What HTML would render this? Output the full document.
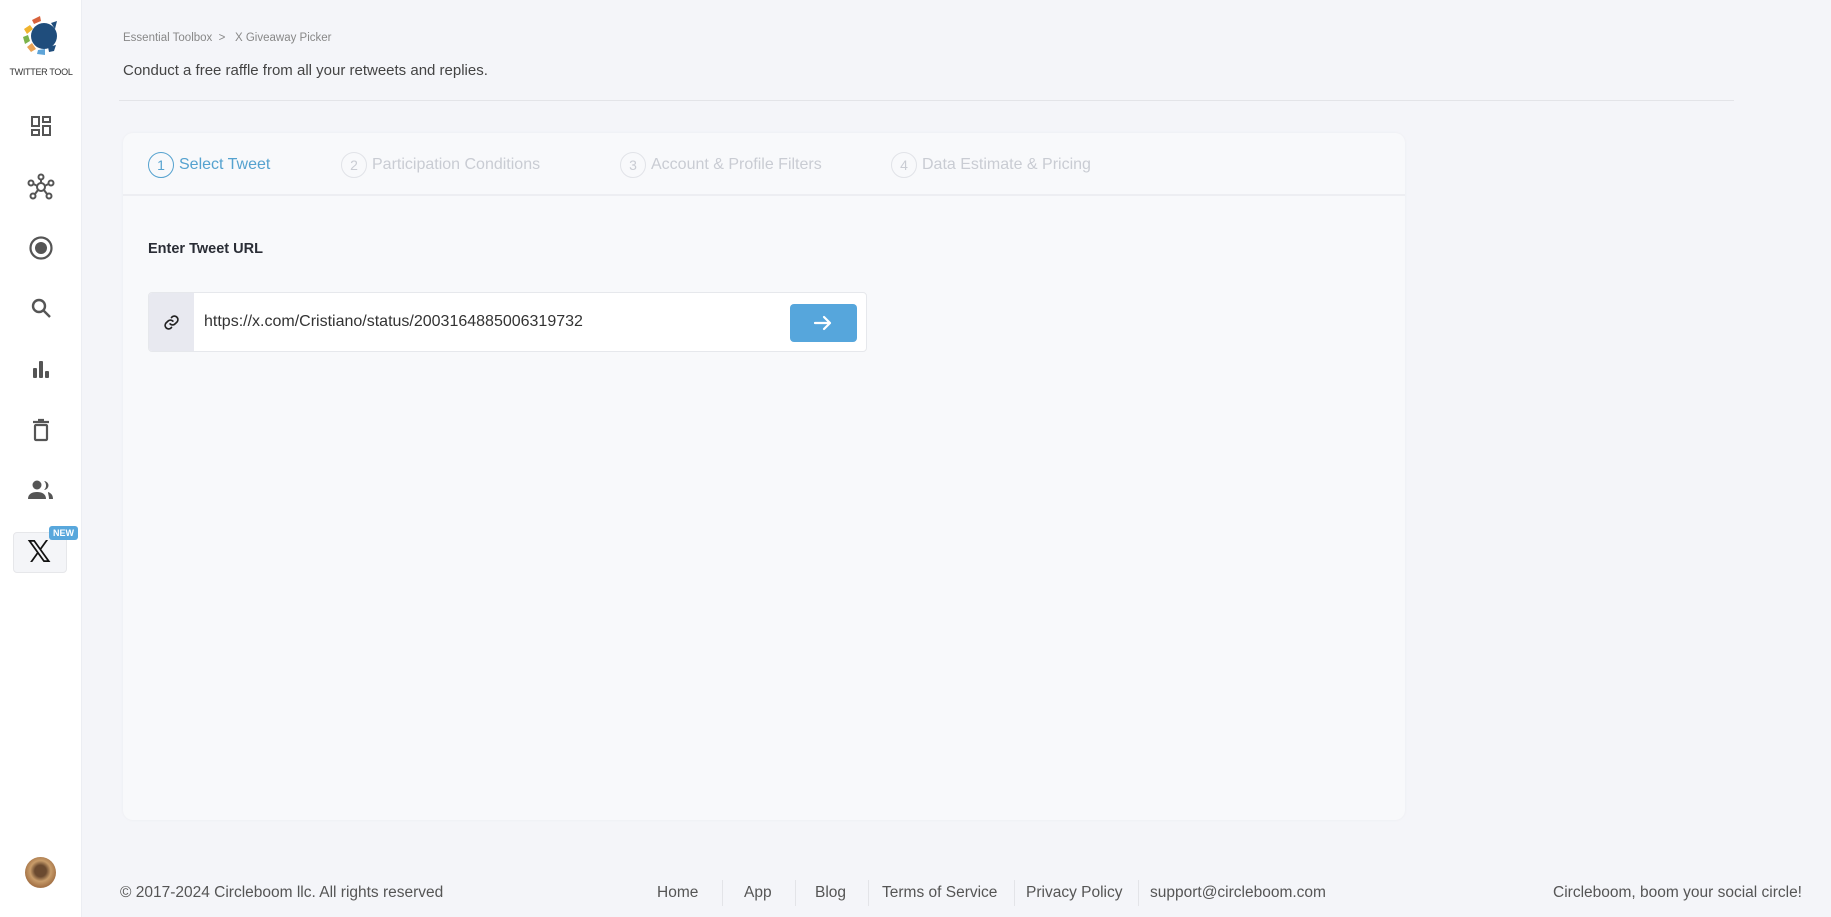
<!DOCTYPE html>
<html><head><meta charset="utf-8"><style>
*{margin:0;padding:0;box-sizing:border-box}
body{width:1831px;height:917px;overflow:hidden;background:#f4f5f9;font-family:"Liberation Sans",sans-serif;position:relative;color:#333}
.sb{position:absolute;left:0;top:0;width:82px;height:917px;background:#fff;border-right:1px solid #eceef3}
.ic{position:absolute;left:41px;transform:translate(-50%,-50%)}
.abs{position:absolute;white-space:nowrap}
.card{position:absolute;left:123px;top:133px;width:1282px;height:687px;background:#f8f9fb;border-radius:10px;box-shadow:0 0 3px rgba(0,0,0,.04)}
.hd{height:63px;border-bottom:2px solid #edeef2}
.step{position:absolute;top:19px;font-size:16px;color:#c9ccd3;display:flex;align-items:center}
.step .c{width:26px;height:26px;border:1.5px solid #e1e3e8;border-radius:50%;display:flex;align-items:center;justify-content:center;margin-right:5px;font-size:14px}
.step.a{color:#55a2cf}.step.a .c{border-color:#55a2cf}
.ft{position:absolute;top:884px;font-size:15.5px;color:#555}
.sep{position:absolute;top:880px;width:1px;height:26px;background:#e3e4e8}
</style></head><body>
<div class="sb">
  <svg class="ic" style="top:34px" width="46" height="46" viewBox="0 0 46 46">
    <path d="M14 9 L22 5 L23 10 L16 13Z" fill="#d8623c"/>
    <path d="M6 18 L12 14 L15 18 L9 23Z" fill="#f0b32d"/>
    <path d="M5 26 L10 24 L12 30 L7 33Z" fill="#7bb24a"/>
    <path d="M9 36 L14 32 L18 38 L13 41Z" fill="#e9a356"/>
    <path d="M20 39 L27 38 L27 44 L19 43Z" fill="#5ea4d8"/>
    <circle cx="26" cy="25" r="13" fill="#1f4d7c"/>
    <path d="M33 12 L39 10 L37 18Z" fill="#1f4d7c"/>
    <path d="M30 36 L38 34 L36 40 L31 41Z" fill="#1f4d7c"/>
  </svg>
  <div class="abs" style="left:0;width:82px;text-align:center;top:67px;font-size:9px;color:#333;letter-spacing:-.3px">TWITTER TOOL</div>
  <svg class="ic" style="top:126px" width="24" height="24" viewBox="0 0 24 24" fill="none" stroke="#555" stroke-width="2"><rect x="3" y="3" width="7" height="9"/><rect x="14" y="3" width="7" height="5"/><rect x="14" y="12" width="7" height="9"/><rect x="3" y="16" width="7" height="5"/></svg>
  <svg class="ic" style="top:187px" width="28" height="28" viewBox="0 0 28 28" fill="none" stroke="#555" stroke-width="2"><circle cx="14" cy="14" r="4"/><circle cx="14" cy="4" r="2.5"/><circle cx="4" cy="10" r="2.5"/><circle cx="24" cy="10" r="2.5"/><circle cx="6" cy="23" r="2.5"/><circle cx="22" cy="23" r="2.5"/><path d="M14 6.5V10M6.5 11l4 2M21.5 11l-4 2M8 21l3-4M20 21l-3-4"/></svg>
  <svg class="ic" style="top:248px" width="26" height="26" viewBox="0 0 26 26"><circle cx="13" cy="13" r="10.5" fill="none" stroke="#555" stroke-width="2.2"/><circle cx="13" cy="13" r="6" fill="#555"/></svg>
  <svg class="ic" style="top:308px" width="24" height="24" viewBox="0 0 24 24" fill="none" stroke="#555" stroke-width="2.4"><circle cx="10" cy="10" r="6"/><path d="M14.5 14.5L21 21"/></svg>
  <svg class="ic" style="top:369px" width="22" height="22" viewBox="0 0 22 22" fill="#555"><rect x="3" y="10" width="4" height="10" rx="1"/><rect x="9" y="3" width="4" height="17" rx="1"/><rect x="15" y="13" width="4" height="7" rx="1"/></svg>
  <svg class="ic" style="top:430px" width="22" height="24" viewBox="0 0 22 24" fill="none" stroke="#555" stroke-width="2.2"><path d="M3 4h16M8 2h6"/><rect x="5" y="7" width="12" height="15" rx="1"/></svg>
  <svg class="ic" style="top:490px" width="28" height="22" viewBox="0 0 28 22" fill="#555"><circle cx="10" cy="6" r="4.5"/><path d="M1 20c0-5 4-7 9-7s9 2 9 7z"/><path d="M17 2a4.5 4.5 0 0 1 0 9 6 6 0 0 0 0-9z"/><path d="M21 13c3 1 5 3 5 7h-4c0-3-1-5-1-7z"/></svg>
  <div style="position:absolute;left:13px;top:532px;width:54px;height:41px;background:#f4f5f8;border:1px solid #e6e7ea;border-radius:4px"></div>
  <div class="abs" style="left:27px;top:535px;font-size:30px;font-weight:bold;color:#111;font-family:'DejaVu Sans',sans-serif">𝕏</div>
  <div class="abs" style="left:49px;top:526px;background:#58a7dc;color:#fff;font-size:9px;font-weight:bold;padding:2px 4px;border-radius:3px">NEW</div>
  <div style="position:absolute;left:25px;top:857px;width:31px;height:31px;border-radius:50%;background:radial-gradient(circle at 50% 45%,#6b4a30 0 25%,#c89c6a 45%,#a47246 70%,#e6d2b4 100%)"></div>
</div>
<div class="abs" style="left:123px;top:32px;font-size:11.5px;color:#888">Essential Toolbox &nbsp;&gt;&nbsp;&nbsp; X Giveaway Picker</div>
<div class="abs" style="left:123px;top:62px;font-size:15px;color:#444">Conduct a free raffle from all your retweets and replies.</div>
<div style="position:absolute;left:119px;top:100px;width:1615px;height:1px;background:#e3e4e8"></div>
<div class="card">
  <div class="hd"></div>
  <div class="step a" style="left:25px"><span class="c">1</span>Select Tweet</div>
  <div class="step" style="left:218px"><span class="c">2</span>Participation Conditions</div>
  <div class="step" style="left:497px"><span class="c">3</span>Account &amp; Profile Filters</div>
  <div class="step" style="left:768px"><span class="c">4</span>Data Estimate &amp; Pricing</div>
  <div class="abs" style="left:25px;top:108px;font-size:14.5px;font-weight:bold;color:#2a2d35">Enter Tweet URL</div>
  <div style="position:absolute;left:25px;top:159px;width:719px;height:60px;background:#fff;border:1px solid #e6e8ec;border-radius:4px;overflow:hidden">
    <div style="position:absolute;left:0;top:0;width:45px;height:60px;background:#e8e9f0"></div>
    <svg style="position:absolute;left:14px;top:21px" width="17" height="17" viewBox="0 0 24 24" fill="none" stroke="#222" stroke-width="2.4" stroke-linecap="round"><path d="M10 14a5 5 0 0 0 7 0l3-3a5 5 0 0 0-7-7l-1 1"/><path d="M14 10a5 5 0 0 0-7 0l-3 3a5 5 0 0 0 7 7l1-1"/></svg>
    <div class="abs" style="left:55px;top:20px;font-size:16px;color:#333">https://x.com/Cristiano/status/2003164885006319732</div>
    <div style="position:absolute;left:641px;top:11px;width:67px;height:38px;background:#56a6dc;border-radius:4px"></div>
    <svg style="position:absolute;left:664px;top:21px" width="20" height="18" viewBox="0 0 20 18" fill="none" stroke="#fff" stroke-width="2.2" stroke-linecap="round" stroke-linejoin="round"><path d="M2 9h15M11 3l6 6-6 6"/></svg>
  </div>
</div>
<div class="ft" style="left:120px">© 2017-2024 Circleboom llc. All rights reserved</div>
<div class="ft" style="left:657px">Home</div><div class="sep" style="left:722px"></div>
<div class="ft" style="left:744px">App</div><div class="sep" style="left:795px"></div>
<div class="ft" style="left:815px">Blog</div><div class="sep" style="left:868px"></div>
<div class="ft" style="left:882px">Terms of Service</div><div class="sep" style="left:1014px"></div>
<div class="ft" style="left:1026px">Privacy Policy</div><div class="sep" style="left:1138px"></div>
<div class="ft" style="left:1150px">support@circleboom.com</div>
<div class="ft" style="right:29px">Circleboom, boom your social circle!</div>
</body></html>
